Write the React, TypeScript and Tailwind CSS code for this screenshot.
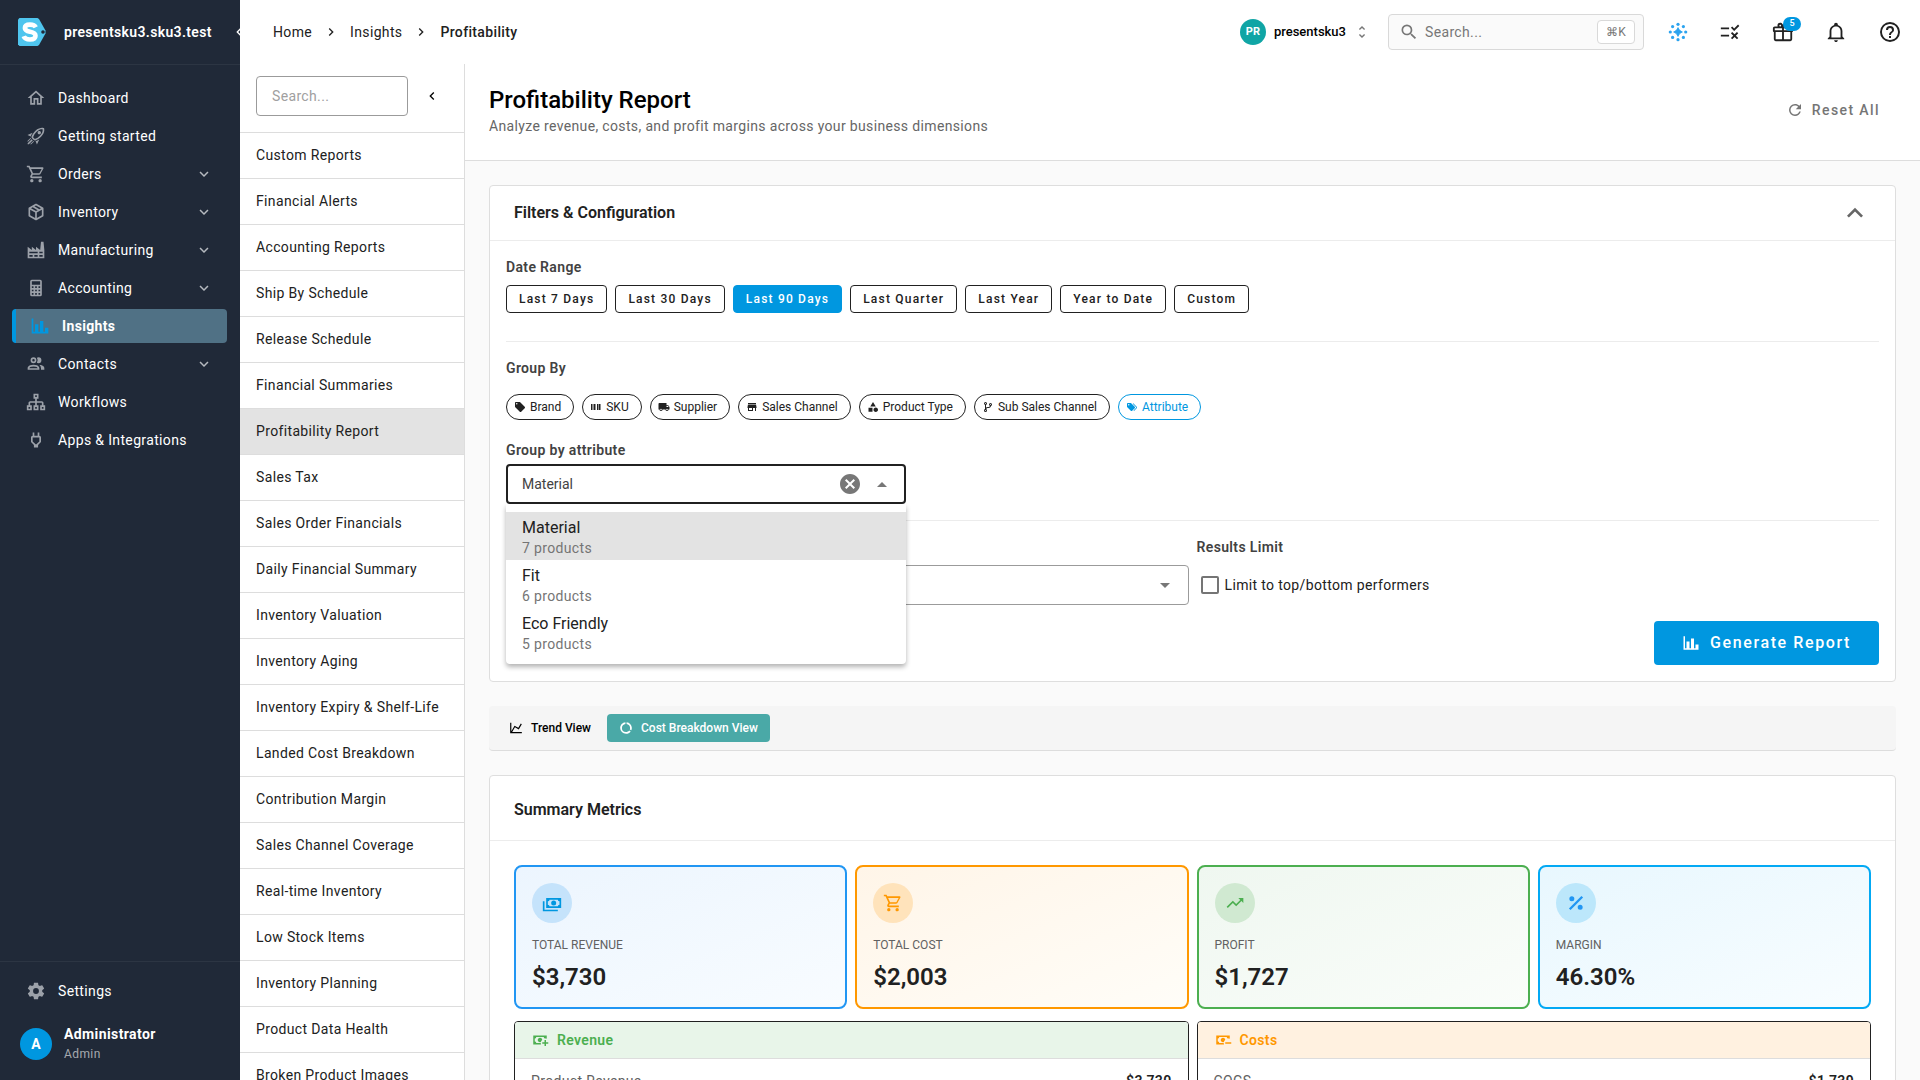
import { useState } from "react";
import { MdRule } from "react-icons/md";

const icons = {
	home: "M12 5.69L17 10.19V18H15V12H9V18H7V10.19L12 5.69M12 3L2 12H5V20H11V14H13V20H19V12H22",
	rocket: "M13.13 22.19L11.5 18.36C13.07 17.78 14.54 17 15.9 16.09L13.13 22.19M5.64 12.5L1.81 10.87L7.91 8.1C7 9.46 6.22 10.93 5.64 12.5M19.22 4C19.5 4 19.75 4 19.96 4.05C20.13 5.44 19.94 8.3 16.66 11.58C14.96 13.29 12.93 14.6 10.65 15.47L8.5 13.37C9.42 11.06 10.73 9.03 12.42 7.34C15.18 4.58 17.64 4 19.22 4M19.22 2C17.24 2 14.24 2.69 11 5.93C8.81 8.12 7.5 10.53 6.65 12.64C6.37 13.39 6.56 14.21 7.11 14.77L9.24 16.89C9.62 17.27 10.13 17.5 10.66 17.5C10.89 17.5 11.13 17.44 11.36 17.35C13.5 16.53 15.88 15.19 18.07 13C23.73 7.34 21.61 2.39 21.61 2.39S20.7 2 19.22 2M14.54 9.46C13.76 8.68 13.76 7.41 14.54 6.63S16.59 5.85 17.37 6.63C18.14 7.41 18.15 8.68 17.37 9.46C16.59 10.24 15.32 10.24 14.54 9.46M6.24 22L9.88 18.36C9.54 18.27 9.21 18.12 8.91 17.91L4.83 22H6.24M2 22H3.41L8.18 17.24L6.76 15.83L2 20.59V22M2 19.17L6.09 15.09C5.88 14.79 5.73 14.47 5.64 14.12L2 17.76V19.17Z",
	cart: "M17,18A2,2 0 0,1 19,20A2,2 0 0,1 17,22C15.89,22 15,21.1 15,20C15,18.89 15.89,18 17,18M1,2H4.27L5.21,4H20A1,1 0 0,1 21,5C21,5.17 20.95,5.34 20.88,5.5L17.3,11.97C16.96,12.58 16.3,13 15.55,13H8.1L7.2,14.63L7.17,14.75A0.25,0.25 0 0,0 7.42,15H19V17H7C5.89,17 5,16.1 5,15C5,14.65 5.09,14.32 5.24,14.04L6.6,11.59L3,4H1V2M7,18A2,2 0 0,1 9,20A2,2 0 0,1 7,22C5.89,22 5,21.1 5,20C5,18.89 5.89,18 7,18M16,11L18.78,6H6.14L8.5,11H16Z",
	box: "M21,16.5C21,16.88 20.79,17.21 20.47,17.38L12.57,21.82C12.41,21.94 12.21,22 12,22C11.79,22 11.59,21.94 11.43,21.82L3.53,17.38C3.21,17.21 3,16.88 3,16.5V7.5C3,7.12 3.21,6.79 3.53,6.62L11.43,2.18C11.59,2.06 11.79,2 12,2C12.21,2 12.41,2.06 12.57,2.18L20.47,6.62C20.79,6.79 21,7.12 21,7.5V16.5M12,4.15L10.11,5.22L16,8.61L17.96,7.5L12,4.15M6.04,7.5L12,10.85L13.96,9.75L8.08,6.35L6.04,7.5M5,15.91L11,19.29V12.58L5,9.21V15.91M19,15.91V9.21L13,12.58V19.29L19,15.91Z",
	factory: "M4,18V20H8V18H4M4,14V16H14V14H4M10,18V20H14V18H10M16,14V16H20V14H16M16,18V20H20V18H16M2,22V8L7,12V8L12,12V8L17,12L18,2H21L22,12V22H2Z",
	calculator: "M7,2H17A2,2 0 0,1 19,4V20A2,2 0 0,1 17,22H7A2,2 0 0,1 5,20V4A2,2 0 0,1 7,2M7,4V8H17V4H7M7,10V12H9V10H7M11,10V12H13V10H11M15,10V12H17V10H15M7,14V16H9V14H7M11,14V16H13V14H11M15,14V16H17V14H15M7,18V20H9V18H7M11,18V20H13V18H11M15,18V20H17V18H15Z",
	chartBar: "M22,21H2V3H4V19H6V10H10V19H12V6H16V19H18V14H22V21Z",
	people: "M13.07 10.41A5 5 0 0 0 13.07 4.59A3.39 3.39 0 0 1 15 4A3.5 3.5 0 0 1 15 11A3.39 3.39 0 0 1 13.07 10.41M5.5 7.5A3.5 3.5 0 1 1 9 11A3.5 3.5 0 0 1 5.5 7.5M7.5 7.5A1.5 1.5 0 1 0 9 6A1.5 1.5 0 0 0 7.5 7.5M16 17V19H2V17S2 13 9 13 16 17 16 17M14 17C13.86 16.22 12.67 15 9 15S4.07 16.31 4 17M15.95 13A5.32 5.32 0 0 1 18 17V19H22V17S22 13.37 15.94 13Z",
	sitemap: "M9 2V8H11V11H5C3.89 11 3 11.89 3 13V16H1V22H7V16H5V13H11V16H9V22H15V16H13V13H19V16H17V22H23V16H21V13C21 11.89 20.11 11 19 11H13V8H15V2H9M11 4H13V6H11V4M3 18H5V20H3V18M11 18H13V20H11V18M19 18H21V20H19V18Z",
	plug: "M16,7V3H14V7H10V3H8V7C7,7 6,8 6,9V14.5L9.5,18V21H14.5V18L18,14.5V9C18,8 17,7 16,7M16,13.67L13.09,16.59L12.67,17H11.33L10.92,16.59L8,13.67V9.09C8,9.06 8.06,9 8.09,9H15.92C15.95,9 16,9.06 16,9.09V13.67Z",
	cog: "M12,15.5A3.5,3.5 0 0,1 8.5,12A3.5,3.5 0 0,1 12,8.5A3.5,3.5 0 0,1 15.5,12A3.5,3.5 0 0,1 12,15.5M19.43,12.97C19.47,12.65 19.5,12.33 19.5,12C19.5,11.67 19.47,11.34 19.43,11L21.54,9.37C21.73,9.22 21.78,8.95 21.66,8.73L19.66,5.27C19.54,5.05 19.27,4.96 19.05,5.05L16.56,6.05C16.04,5.66 15.5,5.32 14.87,5.07L14.5,2.42C14.46,2.18 14.25,2 14,2H10C9.75,2 9.54,2.18 9.5,2.42L9.13,5.07C8.5,5.32 7.96,5.66 7.44,6.05L4.95,5.05C4.73,4.96 4.46,5.05 4.34,5.27L2.34,8.73C2.21,8.95 2.27,9.22 2.46,9.37L4.57,11C4.53,11.34 4.5,11.67 4.5,12C4.5,12.33 4.53,12.65 4.57,12.97L2.46,14.63C2.27,14.78 2.21,15.05 2.34,15.27L4.34,18.73C4.46,18.95 4.73,19.03 4.95,18.95L7.44,17.94C7.96,18.34 8.5,18.68 9.13,18.93L9.5,21.58C9.54,21.82 9.75,22 10,22H14C14.25,22 14.46,21.82 14.5,21.58L14.87,18.93C15.5,18.67 16.04,18.34 16.56,17.94L19.05,18.95C19.27,19.03 19.54,18.95 19.66,18.73L21.66,15.27C21.78,15.05 21.73,14.78 21.54,14.63L19.43,12.97Z",
	down: "M7.41,8.58L12,13.17L16.59,8.58L18,10L12,16L6,10L7.41,8.58Z",
	up: "M7.41,15.41L12,10.83L16.59,15.41L18,14L12,8L6,14L7.41,15.41Z",
	left: "M15.41,16.58L10.83,12L15.41,7.41L14,6L8,12L14,18L15.41,16.58Z",
	right: "M8.59,16.58L13.17,12L8.59,7.41L10,6L16,12L10,18L8.59,16.58Z",
	magnify: "M9.5,3A6.5,6.5 0 0,1 16,9.5C16,11.11 15.41,12.59 14.44,13.73L14.71,14H15.5L20.5,19L19,20.5L14,15.5V14.71L13.73,14.44C12.59,15.41 11.11,16 9.5,16A6.5,6.5 0 0,1 3,9.5A6.5,6.5 0 0,1 9.5,3M9.5,5C7,5 5,7 5,9.5C5,12 7,14 9.5,14C12,14 14,12 14,9.5C14,7 12,5 9.5,5Z",
	unfold: "M12,18.17L8.83,15L7.42,16.41L12,21L16.59,16.41L15.17,15M12,5.83L15.17,9L16.58,7.59L12,3L7.41,7.59L8.83,9L12,5.83Z",
	gift: "M22,12V20A2,2 0 0,1 20,22H4A2,2 0 0,1 2,20V12A1,1 0 0,1 1,11V8A2,2 0 0,1 3,6H6.17C6.06,5.69 6,5.35 6,5A3,3 0 0,1 9,2C10,2 10.88,2.5 11.43,3.24V3.23L12,4L12.57,3.23V3.24C13.12,2.5 14,2 15,2A3,3 0 0,1 18,5C18,5.35 17.94,5.69 17.83,6H21A2,2 0 0,1 23,8V11A1,1 0 0,1 22,12M4,20H11V12H4V20M20,20V12H13V20H20M9,4A1,1 0 0,0 8,5A1,1 0 0,0 9,6A1,1 0 0,0 10,5A1,1 0 0,0 9,4M15,4A1,1 0 0,0 14,5A1,1 0 0,0 15,6A1,1 0 0,0 16,5A1,1 0 0,0 15,4M3,8V10H11V8H3M13,8V10H21V8H13Z",
	bell: "M10 21H14C14 22.1 13.1 23 12 23S10 22.1 10 21M21 19V20H3V19L5 17V11C5 7.9 7.03 5.17 10 4.29V4C10 2.9 10.9 2 12 2S14 2.9 14 4V4.29C16.97 5.17 19 7.9 19 11V17L21 19M17 11C17 8.24 14.76 6 12 6S7 8.24 7 11V18H17V11Z",
	help: "M11,18H13V16H11V18M12,2A10,10 0 0,0 2,12A10,10 0 0,0 12,22A10,10 0 0,0 22,12A10,10 0 0,0 12,2M12,20C7.59,20 4,16.41 4,12C4,7.59 7.59,4 12,4C16.41,4 20,7.59 20,12C20,16.41 16.41,20 12,20M12,6A4,4 0 0,0 8,10H10A2,2 0 0,1 12,8A2,2 0 0,1 14,10C14,12 11,11.75 11,15H13C13,12.75 16,12.5 16,10A4,4 0 0,0 12,6Z",
	refresh: "M17.65,6.35C16.2,4.9 14.21,4 12,4A8,8 0 0,0 4,12A8,8 0 0,0 12,20C15.73,20 18.84,17.45 19.73,14H17.65C16.83,16.33 14.61,18 12,18A6,6 0 0,1 6,12A6,6 0 0,1 12,6C13.66,6 15.14,6.69 16.22,7.78L13,11H20V4L17.65,6.35Z",
	tag: "M5.5,7A1.5,1.5 0 0,1 4,5.5A1.5,1.5 0 0,1 5.5,4A1.5,1.5 0 0,1 7,5.5A1.5,1.5 0 0,1 5.5,7M21.41,11.58L12.41,2.58C12.05,2.22 11.55,2 11,2H4C2.89,2 2,2.89 2,4V11C2,11.55 2.22,12.05 2.59,12.41L11.58,21.41C11.95,21.77 12.45,22 13,22C13.55,22 14.05,21.77 14.41,21.41L21.41,14.41C21.78,14.05 22,13.55 22,13C22,12.44 21.77,11.94 21.41,11.58Z",
	tags: "M5.5,9A1.5,1.5 0 0,0 7,7.5A1.5,1.5 0 0,0 5.5,6A1.5,1.5 0 0,0 4,7.5A1.5,1.5 0 0,0 5.5,9M17.41,11.58C17.77,11.94 18,12.44 18,13C18,13.55 17.78,14.05 17.41,14.41L12.41,19.41C12.05,19.77 11.55,20 11,20C10.45,20 9.95,19.78 9.58,19.41L2.59,12.42C2.22,12.05 2,11.55 2,11V6C2,4.89 2.89,4 4,4H9C9.55,4 10.05,4.22 10.41,4.58L17.41,11.58M13.54,5.71L14.54,4.71L21.41,11.58C21.78,11.94 22,12.45 22,13C22,13.55 21.78,14.05 21.42,14.41L16.04,19.79L15.04,18.79L20.75,13L13.54,5.71Z",
	barcode: "M2,6H4V18H2V6M5,6H6V18H5V6M7,6H10V18H7V6M11,6H12V18H11V6M14,6H16V18H14V6M17,6H20V18H17V6M21,6H22V18H21V6Z",
	truck: "M18,18.5A1.5,1.5 0 0,1 16.5,17A1.5,1.5 0 0,1 18,15.5A1.5,1.5 0 0,1 19.5,17A1.5,1.5 0 0,1 18,18.5M19.5,9.5L21.46,12H17V9.5M6,18.5A1.5,1.5 0 0,1 4.5,17A1.5,1.5 0 0,1 6,15.5A1.5,1.5 0 0,1 7.5,17A1.5,1.5 0 0,1 6,18.5M20,8H17V4H3C1.89,4 1,4.89 1,6V17H3A3,3 0 0,0 6,20A3,3 0 0,0 9,17H15A3,3 0 0,0 18,20A3,3 0 0,0 21,17H23V12L20,8Z",
	store: "M12,18H6V14H12M21,14V12L20,7H4L3,12V14H4V20H14V14H18V20H20V14M20,4H4V6H20V4Z",
	shape: "M11,13.5V21.5H3V13.5H11M12,2L17.5,11H6.5L12,2M17.5,13C20,13 22,15 22,17.5C22,20 20,22 17.5,22C15,22 13,20 13,17.5C13,15 15,13 17.5,13Z",
	branch: "M13,14C9.64,14 8.54,15.35 8.18,16.24C9.25,16.7 10,17.76 10,19A3,3 0 0,1 7,22A3,3 0 0,1 4,19C4,17.69 4.83,16.58 6,16.17V7.83C4.83,7.42 4,6.31 4,5A3,3 0 0,1 7,2A3,3 0 0,1 10,5C10,6.31 9.17,7.42 8,7.83V13.12C8.88,12.47 10.16,12 12,12C14.67,12 15.56,10.66 15.85,9.77C14.77,9.32 14,8.25 14,7A3,3 0 0,1 17,4A3,3 0 0,1 20,7C20,8.34 19.12,9.5 17.91,9.86C17.65,11.29 16.68,14 13,14M7,18A1,1 0 0,0 6,19A1,1 0 0,0 7,20A1,1 0 0,0 8,19A1,1 0 0,0 7,18M7,4A1,1 0 0,0 6,5A1,1 0 0,0 7,6A1,1 0 0,0 8,5A1,1 0 0,0 7,4M17,6A1,1 0 0,0 16,7A1,1 0 0,0 17,8A1,1 0 0,0 18,7A1,1 0 0,0 17,6Z",
	closeCircle: "M12,2C17.53,2 22,6.47 22,12C22,17.53 17.53,22 12,22C6.47,22 2,17.53 2,12C2,6.47 6.47,2 12,2M15.59,7L12,10.59L8.41,7L7,8.41L10.59,12L7,15.59L8.41,17L12,13.41L15.59,17L17,15.59L13.41,12L17,8.41L15.59,7Z",
	menuDown: "M7,10L12,15L17,10H7Z",
	menuUp: "M7,15L12,10L17,15H7Z",
	chartLine: "M16,11.78L20.24,4.45L21.97,5.45L16.74,14.5L10.23,10.75L5.46,19H22V21H2V3H4V17.54L9.5,8L16,11.78Z",
	donut: "M13,2.05V5.08C16.39,5.57 19,8.47 19,12C19,12.9 18.82,13.75 18.5,14.54L21.12,16.07C21.68,14.83 22,13.45 22,12C22,6.82 18.05,2.55 13,2.05M12,19A7,7 0 0,1 5,12C5,8.47 7.61,5.57 11,5.08V2.05C5.94,2.55 2,6.81 2,12A10,10 0 0,0 12,22C15.3,22 18.23,20.39 20.05,17.91L17.45,16.38C16.17,18 14.21,19 12,19Z",
	cash: "M5,6H23V18H5V6M14,9A3,3 0 0,1 17,12A3,3 0 0,1 14,15A3,3 0 0,1 11,12A3,3 0 0,1 14,9M9,8A2,2 0 0,1 7,10V14A2,2 0 0,1 9,16H19A2,2 0 0,1 21,14V10A2,2 0 0,1 19,8H9M1,10H3V20H19V22H1V10Z",
	trending: "M16,6L18.29,8.29L13.41,13.17L9.41,9.17L2,16.59L3.41,18L9.41,12L13.41,16L19.71,9.71L22,12V6H16Z",
	percent: "M18.5,3.5L20.5,5.5L5.5,20.5L3.5,18.5L18.5,3.5M7,4A3,3 0 0,1 10,7A3,3 0 0,1 7,10A3,3 0 0,1 4,7A3,3 0 0,1 7,4M17,14A3,3 0 0,1 20,17A3,3 0 0,1 17,20A3,3 0 0,1 14,17A3,3 0 0,1 17,14Z",
	cashPlus: "M15 15V17H18V20H20V17H23V15H20V12H18V15M14.97 11.61C14.85 10.28 13.59 8.97 12 9C10.3 9.03 9 10.3 9 12C9 13.7 10.3 14.94 12 15C12.38 15 12.77 14.92 13.14 14.77C13.41 13.67 13.86 12.63 14.97 11.61M13 16H7C7 14.9 6.1 14 5 14V10C6.1 10 7 9.1 7 8H17C17 9.1 17.9 10 19 10V10.06C19.67 10.06 20.34 10.18 21 10.4V6H3V18H13.32C13.1 17.33 13 16.66 13 16Z",
	cashMinus: "M15 15V17H23V15M14.97 11.61C14.85 10.28 13.59 8.97 12 9C10.3 9.03 9 10.3 9 12C9 13.7 10.3 14.94 12 15C12.38 15 12.77 14.92 13.14 14.77C13.41 13.67 13.86 12.63 14.97 11.61M13 16H7C7 14.9 6.1 14 5 14V10C6.1 10 7 9.1 7 8H17C17 9.1 17.9 10 19 10V10.06C19.67 10.06 20.34 10.18 21 10.4V6H3V18H13.32C13.1 17.33 13 16.66 13 16Z",
};

type IconName = keyof typeof icons;

const Icon = ({ name, className = "size-5" }: { name: IconName; className?: string }) => (
	<svg viewBox="0 0 24 24" fill="currentColor" aria-hidden="true" className={`shrink-0 ${className}`}>
		<path d={icons[name]} />
	</svg>
);

const navItems: { label: string; icon: IconName; expandable?: boolean; active?: boolean }[] = [
	{ label: "Dashboard", icon: "home" },
	{ label: "Getting started", icon: "rocket" },
	{ label: "Orders", icon: "cart", expandable: true },
	{ label: "Inventory", icon: "box", expandable: true },
	{ label: "Manufacturing", icon: "factory", expandable: true },
	{ label: "Accounting", icon: "calculator", expandable: true },
	{ label: "Insights", icon: "chartBar", active: true },
	{ label: "Contacts", icon: "people", expandable: true },
	{ label: "Workflows", icon: "sitemap" },
	{ label: "Apps & Integrations", icon: "plug" },
];

const reports = [
	"Custom Reports",
	"Financial Alerts",
	"Accounting Reports",
	"Ship By Schedule",
	"Release Schedule",
	"Financial Summaries",
	"Profitability Report",
	"Sales Tax",
	"Sales Order Financials",
	"Daily Financial Summary",
	"Inventory Valuation",
	"Inventory Aging",
	"Inventory Expiry & Shelf-Life",
	"Landed Cost Breakdown",
	"Contribution Margin",
	"Sales Channel Coverage",
	"Real-time Inventory",
	"Low Stock Items",
	"Inventory Planning",
	"Product Data Health",
	"Broken Product Images",
];

const ranges = ["Last 7 Days", "Last 30 Days", "Last 90 Days", "Last Quarter", "Last Year", "Year to Date", "Custom"];

const groups: { label: string; icon: IconName }[] = [
	{ label: "Brand", icon: "tag" },
	{ label: "SKU", icon: "barcode" },
	{ label: "Supplier", icon: "truck" },
	{ label: "Sales Channel", icon: "store" },
	{ label: "Product Type", icon: "shape" },
	{ label: "Sub Sales Channel", icon: "branch" },
	{ label: "Attribute", icon: "tags" },
];

const attributes = [
	{ name: "Material", count: 7 },
	{ name: "Fit", count: 6 },
	{ name: "Eco Friendly", count: 5 },
];

const metrics: { label: string; value: string; icon: IconName; card: string; badge: string }[] = [
	{ label: "TOTAL REVENUE", value: "$3,730", icon: "cash", card: "border-[#2196f3] from-[#ecf5fe] to-[#f8fcff]", badge: "bg-[#c5e3fb] text-[#0097e0]" },
	{ label: "TOTAL COST", value: "$2,003", icon: "cart", card: "border-[#ff9800] from-[#fff5e8] to-[#fffdf8]", badge: "bg-[#ffe3bb] text-[#ff9800]" },
	{ label: "PROFIT", value: "$1,727", icon: "trending", card: "border-[#4caf50] from-[#eff7f0] to-[#fafdfa]", badge: "bg-[#d0e9d1] text-[#4caf50]" },
	{ label: "MARGIN", value: "46.30%", icon: "percent", card: "border-[#03a9f4] from-[#e8f7fe] to-[#f8fdff]", badge: "bg-[#bce7fb] text-[#2196f3]" },
];

function Sidebar() {
	return (
		<aside className="flex w-60 shrink-0 flex-col overflow-hidden bg-[#202938] text-white">
			<div className="flex h-[65px] shrink-0 items-center border-b border-[#2c3543] pl-[18px]">
				<svg viewBox="0 0 28 28" className="size-7 shrink-0" aria-hidden="true">
					<path d="M1.5 0H19.5L21 1L27.5 12.5V15.5L21 27L19.5 28H1.5L0 26.5V1.5Z" fill="#4fc5ee" />
					<path d="M17.8 9.2C16.7 7.1 14.6 6.6 12 6.6C9.1 6.6 6.9 7.5 6.9 10C6.9 12.6 9 13.2 12 13.8C15.2 14.4 17.5 15 17.5 17.8C17.5 20.4 15 21.5 12 21.5C9 21.5 6.6 20.6 5.7 18.2" fill="none" stroke="white" strokeWidth="4.6" />
					<circle cx="25" cy="14" r="1.8" fill="#202938" />
				</svg>
				<span className="ml-[18px] w-[167px] shrink-0 text-sm font-semibold tracking-wide">presentsku3.sku3.test</span>
				<button aria-label="Collapse menu" className="shrink-0">
					<Icon name="left" className="size-4" />
				</button>
			</div>
			<nav className="mt-4 flex flex-1 flex-col gap-1 pr-[13px] pl-3">
				{navItems.map((item) => (
					<a
						key={item.label}
						href="#"
						className={`flex h-[34px] items-center rounded px-3.5 text-sm tracking-wide ${item.active ? "border-l-4 border-[#0097e0] bg-[#507185] font-bold" : ""}`}
					>
						<Icon name={item.icon} className={item.active ? "size-5 text-[#0097e0]" : "size-5 text-[#9ca1a9]"} />
						<span className="ml-3 flex-1">{item.label}</span>
						{item.expandable && <Icon name="down" className="size-[18px] text-[#b5b9bf]" />}
					</a>
				))}
			</nav>
			<div className="border-t border-[#2c3543] px-5 pt-3 pb-4">
				<a href="#" className="flex h-[34px] items-center gap-3 px-1.5 text-sm tracking-wide">
					<Icon name="cog" className="size-5 text-[#9ca1a9]" />
					Settings
				</a>
				<div className="mt-4 flex items-center gap-3">
					<div className="flex size-8 items-center justify-center rounded-full bg-[#0097e0] text-sm font-bold">A</div>
					<div className="tracking-wide">
						<p className="text-sm leading-5 font-bold">Administrator</p>
						<p className="text-xs leading-5 text-[#a6a9af]">Admin</p>
					</div>
				</div>
			</div>
		</aside>
	);
}

function TopBar() {
	return (
		<header className="flex h-16 shrink-0 items-center justify-between bg-white pr-[18px] pl-[33px]">
			<nav aria-label="Breadcrumb" className="flex items-center text-sm tracking-wide">
				<a href="#">Home</a>
				<Icon name="right" className="mx-[11px] size-4" />
				<a href="#">Insights</a>
				<Icon name="right" className="mx-[11px] size-4" />
				<span className="font-medium">Profitability</span>
			</nav>
			<div className="flex items-center">
				<button className="flex items-center gap-2 text-[13px] font-medium text-black">
					<span className="flex size-[26px] items-center justify-center rounded-full bg-[#10a5a5] text-[11px] font-bold text-white">PR</span>
					presentsku3
					<Icon name="unfold" className="size-4 text-[#777777]" />
				</button>
				<label className="ml-[18px] flex h-9 w-64 items-center rounded border border-[#d9d9d9] bg-[#fafafa] pr-2 pl-2.5 text-[#777777]">
					<Icon name="magnify" className="size-5" />
					<input type="search" aria-label="Search" placeholder="Search..." className="ml-1.5 w-0 flex-1 text-sm tracking-wide outline-none placeholder:text-[#777777]" />
					<kbd className="flex h-6 w-[38px] items-center justify-center rounded border border-[#d9d9d9] bg-white font-['Roboto'] text-xs">⌘K</kbd>
				</label>
				<div className="ml-6 flex items-center gap-[31px]">
					<button aria-label="Assistant" className="text-[#2ba3ef]">
						<svg viewBox="0 0 20 20" fill="currentColor" className="size-5" aria-hidden="true">
							<path d="M10 5.6Q11 9 14.4 10Q11 11 10 14.4Q9 11 5.6 10Q9 9 10 5.6Z" stroke="currentColor" strokeWidth="0.8" />
							<circle cx="10" cy="2.3" r="1.6" />
							<circle cx="10" cy="17.7" r="1.6" />
							<circle cx="2.3" cy="10" r="1.6" />
							<circle cx="17.7" cy="10" r="1.6" />
							<circle cx="4.6" cy="4.6" r="1.6" />
							<circle cx="15.4" cy="4.6" r="1.6" />
							<circle cx="4.6" cy="15.4" r="1.6" />
							<circle cx="15.4" cy="15.4" r="1.6" />
						</svg>
					</button>
					<button aria-label="Tasks"><MdRule className="size-[22px]" /></button>
					<button aria-label="What's new" className="relative">
						<Icon name="gift" className="size-[22px]" />
						<span className="absolute -top-1 left-[11px] flex h-3.5 w-[18px] items-center justify-center rounded-full bg-[#0097e0] text-[9px] font-medium text-white">5</span>
					</button>
					<button aria-label="Notifications"><Icon name="bell" className="size-[22px]" /></button>
					<button aria-label="Help"><Icon name="help" className="size-6" /></button>
				</div>
			</div>
		</header>
	);
}

function ReportList() {
	return (
		<aside className="w-[225px] shrink-0 overflow-hidden border-r border-[#dddddd] bg-white">
			<div className="flex h-[68px] items-center px-4 pb-1">
				<input type="search" aria-label="Search reports" placeholder="Search..." className="h-10 w-0 flex-1 rounded border border-[#9b9b9b] px-[15px] text-sm tracking-wide outline-none placeholder:text-[#a0a0a0]" />
				<button aria-label="Collapse reports" className="ml-4 text-black">
					<Icon name="left" className="size-4" />
				</button>
				<span className="w-2" />
			</div>
			<nav>
				{reports.map((report) => (
					<a
						key={report}
						href="#"
						className={`flex h-[46px] items-center border-t border-[#dddddd] px-4 pb-0.5 text-sm tracking-wide ${report === "Profitability Report" ? "bg-[#e3e3e3]" : ""}`}
					>
						{report}
					</a>
				))}
			</nav>
		</aside>
	);
}

function Filters() {
	const [range, setRange] = useState("Last 90 Days");
	const [group, setGroup] = useState("Attribute");
	const [attribute, setAttribute] = useState("Material");

	return (
		<section className="rounded border border-[#dedede] bg-white">
			<div className="flex h-[55px] items-center justify-between border-b border-[#ececec] px-6">
				<h2 className="text-base font-semibold">Filters &amp; Configuration</h2>
				<button aria-label="Collapse filters" className="text-[#666666]"><Icon name="up" className="size-8" /></button>
			</div>
			<div className="p-4">
				<h3 className="text-sm leading-5 font-semibold tracking-wide text-[#424242]">Date Range</h3>
				<div className="mt-2 flex flex-wrap gap-2">
					{ranges.map((item) => (
						<button
							key={item}
							onClick={() => setRange(item)}
							className={`h-7 rounded border px-3 text-xs font-medium tracking-widest ${item === range ? "border-[#0097e0] bg-[#0097e0] text-white" : "border-[#212121]"}`}
						>
							{item}
						</button>
					))}
				</div>
				<hr className="mt-7 mb-4 border-[#ececec]" />
				<h3 className="text-sm leading-5 font-semibold tracking-wide text-[#424242]">Group By</h3>
				<div className="mt-4 flex flex-wrap gap-2">
					{groups.map((item) => (
						<button
							key={item.label}
							onClick={() => setGroup(item.label)}
							className={`flex h-[26px] items-center gap-1 rounded-full border pr-3 pl-[7px] text-xs ${item.label === group ? "border-[#0097e0] text-[#0097e0]" : "border-[#212121]"}`}
						>
							<Icon name={item.icon} className="size-3" />
							{item.label}
						</button>
					))}
				</div>
				<label htmlFor="attribute" className="mt-5 block text-sm leading-5 font-semibold tracking-wide text-[#424242]">
					Group by attribute
				</label>
				<div className="relative mt-1 w-[400px]">
					<div className="flex h-10 items-center rounded border-2 border-[#212121] pr-2.5 pl-3.5 text-[#777777]">
						<input
							id="attribute"
							role="combobox"
							aria-expanded="true"
							aria-controls="attribute-options"
							value={attribute}
							onChange={(e) => setAttribute(e.target.value)}
							className="w-0 flex-1 text-sm text-[#424242] outline-none"
						/>
						<button aria-label="Clear attribute" onClick={() => setAttribute("")}><Icon name="closeCircle" className="size-6" /></button>
						<Icon name="menuUp" className="ml-2 size-6" />
					</div>
					<ul id="attribute-options" role="listbox" className="absolute top-full right-0 left-0 z-10 rounded-b bg-white py-2 shadow-[0_3px_5px_rgba(0,0,0,0.3)]">
						{attributes.map((item) => (
							<li
								key={item.name}
								role="option"
								aria-selected={item.name === attribute}
								onClick={() => setAttribute(item.name)}
								className={`px-4 pt-1.5 pb-0.5 ${item.name === attribute ? "bg-[#e3e3e3]" : ""}`}
							>
								<p className="text-base leading-5">{item.name}</p>
								<p className="text-sm leading-5 tracking-wide text-[#757575]">{item.count} products</p>
							</li>
						))}
					</ul>
				</div>
				<hr className="my-4 border-[#ececec]" />
				<div className="grid grid-cols-2 items-end gap-2">
					<div className="relative">
						<select aria-label="Sort by" className="block h-10 w-full appearance-none rounded border border-[#9b9b9b] px-4 text-sm outline-none" />
						<Icon name="menuDown" className="pointer-events-none absolute top-2 right-3 size-6 text-[#777777]" />
					</div>
					<div>
						<h3 className="text-sm leading-5 font-semibold tracking-wide text-[#424242]">Results Limit</h3>
						<label className="mt-2 flex h-10 items-center gap-1.5 pl-1 text-sm tracking-wide">
							<input type="checkbox" className="size-[18px] appearance-none rounded-xs border-2 border-[#757575]" />
							Limit to top/bottom performers
						</label>
					</div>
				</div>
				<div className="mt-4 flex justify-end">
					<button className="flex h-11 items-center gap-2.5 rounded bg-[#0097e0] px-7 text-base font-medium tracking-widest text-white">
						<Icon name="chartBar" className="size-[18px]" />
						Generate Report
					</button>
				</div>
			</div>
		</section>
	);
}

function Breakdown({ title, icon, tone, row, value }: { title: string; icon: IconName; tone: string; row: string; value: string }) {
	return (
		<div className="overflow-hidden rounded border border-[#212121]">
			<h3 className={`flex h-[37px] items-center gap-2 border-b border-[#dddddd] px-4 text-sm font-semibold tracking-wide ${tone}`}>
				<Icon name={icon} className="size-[18px]" />
				{title}
			</h3>
			<div className="flex justify-between px-4 py-3 text-sm leading-5 tracking-wide">
				<span className="text-[#616161]">{row}</span>
				<span className="font-semibold">{value}</span>
			</div>
		</div>
	);
}

export default function App() {
	return (
		<div className="flex h-screen overflow-hidden bg-[#fafafa] font-['Roboto',sans-serif] text-[#212121]">
			<Sidebar />
			<div className="flex min-w-0 flex-1 flex-col">
				<TopBar />
				<div className="flex min-h-0 flex-1">
					<ReportList />
					<main className="min-w-0 flex-1 overflow-hidden">
						<div className="flex h-[97px] items-center justify-between border-b border-[#dddddd] bg-white px-6 pb-1">
							<div>
								<h1 className="text-2xl font-medium text-black">Profitability Report</h1>
								<p className="text-sm leading-5 tracking-wide text-[#666666]">Analyze revenue, costs, and profit margins across your business dimensions</p>
							</div>
							<button className="flex items-center gap-2 px-4 text-sm font-medium tracking-widest text-[#757575]">
								<Icon name="refresh" className="size-[18px]" />
								Reset All
							</button>
						</div>
						<div className="flex flex-col gap-6 p-6">
							<Filters />
							<div className="flex h-[45px] items-center gap-4 rounded border-b border-[#dddddd] bg-[#f5f5f5] px-5 text-xs font-medium">
								<button className="flex items-center gap-2 text-black">
									<Icon name="chartLine" className="size-3.5" />
									Trend View
								</button>
								<button className="flex h-7 items-center gap-2 rounded bg-[#4aa9a7] px-3 text-white">
									<Icon name="donut" className="size-3.5" />
									Cost Breakdown View
								</button>
							</div>
							<section className="rounded border border-[#dedede] bg-white">
								<h2 className="flex h-[65px] items-center border-b border-[#ececec] px-6 pt-1 text-base font-semibold">Summary Metrics</h2>
								<div className="p-6">
									<div className="grid grid-cols-4 gap-2">
										{metrics.map((metric) => (
											<div key={metric.label} className={`rounded-lg border-2 bg-gradient-to-br px-4 pt-4 pb-3 ${metric.card}`}>
												<div className={`flex size-10 items-center justify-center rounded-full ${metric.badge}`}>
													<Icon name={metric.icon} className="size-5" />
												</div>
												<p className="mt-3 text-xs leading-5 text-[#616161]">{metric.label}</p>
												<p className="mt-1 text-2xl leading-9 font-semibold">{metric.value}</p>
											</div>
										))}
									</div>
									<div className="mt-3 grid grid-cols-2 gap-2">
										<Breakdown title="Revenue" icon="cashPlus" tone="bg-[#e8f5e9] text-[#4caf50]" row="Product Revenue" value="$3,730" />
										<Breakdown title="Costs" icon="cashMinus" tone="bg-[#fff1e0] text-[#ff9800]" row="COGS" value="$1,739" />
									</div>
								</div>
							</section>
						</div>
					</main>
				</div>
			</div>
		</div>
	);
}
